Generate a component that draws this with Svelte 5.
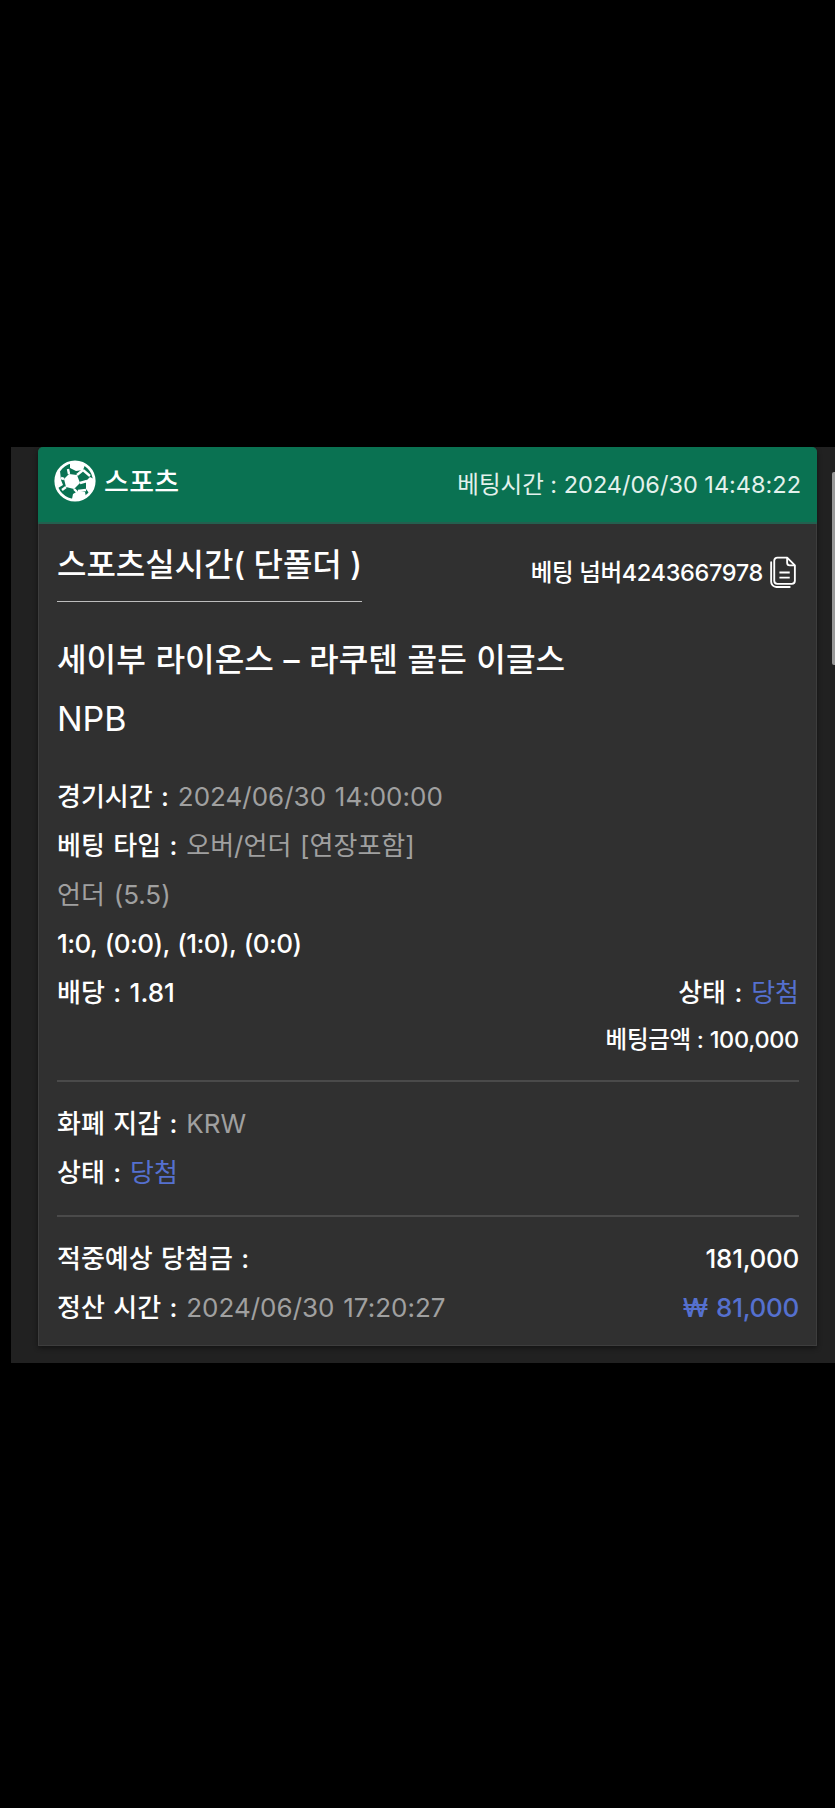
<script>
  const panelLines = [
    { label: '경기시간 :', value: '2024/06/30 14:00:00' },
    { label: '베팅 타입 :', value: '오버/언더 [연장포함]' }
  ];
</script>

<div class="page">
  <section class="panel">
    <div class="scroll-thumb"></div>
    <article class="card">
      <header class="card-head">
        <div class="brand">
          <svg class="ball" viewBox="0 0 42 42" aria-hidden="true">
            <circle cx="21" cy="21" r="19.2" fill="none" stroke="#fff" stroke-width="2.8" />
            <path d="M15 14l8 1 3 8-6 6-8-2-2-8z" fill="#fff" />
            <path d="M16 3l8-1 7 3-2 5-7 1-6-3zM40 19l-1 9-4 5-3-4 0-8 4-4zM18 39l8 1 6-3-1-5-7-1-5 3zM3 14l3-3 1 9 2 5-5 3-2-6z" fill="#fff" />
            <path d="M23 15l6-5M26 23l7-2M20 29l3 3M12 27l-4 3M10 19l-3-1M15 14l-1-5M29 10l7 6M24 31l8-1" stroke="#fff" stroke-width="2.4" fill="none" />
          </svg>
          <span class="brand-name">스포츠</span>
        </div>
        <div class="bet-time">베팅시간 : 2024/06/30 14:48:22</div>
      </header>

      <div class="card-body">
        <div class="title-row">
          <h2 class="bet-kind">스포츠실시간( 단폴더 )</h2>
          <div class="bet-no">
            <span>베팅 넘버4243667978</span>
            <svg class="copy" viewBox="0 0 28 32" aria-hidden="true">
              <path d="M9 2.5h9.500l7.500 7.500v15a3 3 0 0 1-3 3H9a3 3 0 0 1-3-3v-19.500a3 3 0 0 1 3-3z" fill="none" stroke="#fff" stroke-width="1.800" stroke-linejoin="round" />
              <path d="M18.500 2.500v5a2.500 2.500 0 0 0 2.500 2.500h5" fill="none" stroke="#fff" stroke-width="1.800" />
              <path d="M3 7v19a5 5 0 0 0 5 5h13" fill="none" stroke="#fff" stroke-width="1.800" stroke-linecap="round" />
              <path d="M11 17h10M11 22h10" stroke="#fff" stroke-width="1.800" />
            </svg>
          </div>
        </div>

        <h1 class="match">세이부 라이온스 – 라쿠텐 골든 이글스</h1>
        <div class="league">NPB</div>

        <div class="lines">
          {#each panelLines as line}
            <div class="row"><b>{line.label}</b> <span class="muted">{line.value}</span></div>
          {/each}
          <div class="row muted">언더 (5.5)</div>
          <div class="row strong">1:0, (0:0), (1:0), (0:0)</div>
          <div class="row split">
            <b>배당 : 1.81</b>
            <span><b>상태 :</b> <span class="blue">당첨</span></span>
          </div>
          <div class="stake"><b>베팅금액 : 100,000</b></div>
        </div>

        <hr />

        <div class="lines">
          <div class="row"><b>화폐 지갑 :</b> <span class="muted">KRW</span></div>
          <div class="row"><b>상태 :</b> <span class="blue">당첨</span></div>
        </div>

        <hr />

        <div class="lines">
          <div class="row split">
            <b>적중예상 당첨금 :</b>
            <b class="tight">181,000</b>
          </div>
          <div class="row split">
            <span><b>정산 시간 :</b> <span class="muted">2024/06/30 17:20:27</span></span>
            <b class="blue tight">₩ 81,000</b>
          </div>
        </div>
      </div>
    </article>
  </section>
</div>

<style>
  :global(body) {
    margin: 0;
    background: #000;
  }

  .page {
    height: 1808px;
    padding-top: 447px;
    box-sizing: border-box;
    font-family: Inter, "Noto Sans CJK KR", sans-serif;
    color: #fff;
    overflow: hidden;
  }

  .panel {
    position: relative;
    margin-left: 11px;
    padding: 0 18px 17px 27px;
    background: #212121;
  }

  .scroll-thumb {
    position: absolute;
    right: 0;
    top: 25px;
    width: 3px;
    height: 193px;
    background: #999;
    border-radius: 2px 0 0 2px;
  }

  .card {
    background: #303030;
    border: 1px solid #3d3d3d;
    border-top: 0;
    border-radius: 5px 5px 0 0;
    box-shadow: 0 2px 5px rgba(0, 0, 0, 0.45);
  }

  .card-head {
    display: flex;
    justify-content: space-between;
    align-items: center;
    height: 75px;
    margin: 0 -1px;
    padding: 0 16px 0 16px;
    background: #0a7252;
    border-bottom: 2px solid #23604f;
    border-radius: 5px 5px 0 0;
  }

  .brand {
    display: flex;
    align-items: center;
    gap: 8px;
    margin-top: -8px;
  }

  .ball {
    width: 42px;
    height: 42px;
  }

  .brand-name {
    font-size: 27px;
    font-weight: 500;
    letter-spacing: 0.3px;
  }

  .bet-time {
    margin-top: -4px;
    font-size: 23.500px;
    color: #e3f1ec;
  }

  .card-body {
    padding: 17px 17px 13px 18px;
  }

  .title-row {
    display: flex;
    justify-content: space-between;
    align-items: flex-start;
  }

  .bet-kind {
    margin: 0;
    padding-bottom: 13px;
    border-bottom: 1px solid #bdbdbd;
    font-size: 32px;
    font-weight: 500;
    line-height: 47px;
    letter-spacing: -0.05px;
  }

  .bet-no {
    display: flex;
    align-items: center;
    gap: 5px;
    margin: 13px 2px 0 0;
    font-size: 23.500px;
    font-weight: 500;
    letter-spacing: -0.35px;
  }

  .copy {
    width: 29px;
    height: 33px;
  }

  .match {
    margin: 33px 0 0;
    font-size: 32.200px;
    font-weight: 500;
    line-height: 50px;
    word-spacing: 1px;
  }

  .league {
    margin-top: 9px;
    margin-bottom: 28px;
    font-size: 34px;
    line-height: 50px;
  }

  .row {
    font-size: 26px;
    line-height: 49px;
    word-spacing: 1.500px;
  }

  .row b, .stake b, .strong {
    font-weight: 500;
  }

  .strong {
    letter-spacing: -0.6px;
  }

  .muted {
    color: #a0a0a0;
  }

  .blue {
    color: #5570cf;
  }

  .split {
    display: flex;
    justify-content: space-between;
  }

  .tight {
    letter-spacing: -0.3px;
  }

  .stake {
    text-align: right;
    font-size: 23.500px;
    line-height: 45px;
    letter-spacing: -0.3px;
  }

  hr {
    height: 2px;
    margin: 18px 0 17px;
    border: 0;
    background: #4a4a4a;
  }
</style>
